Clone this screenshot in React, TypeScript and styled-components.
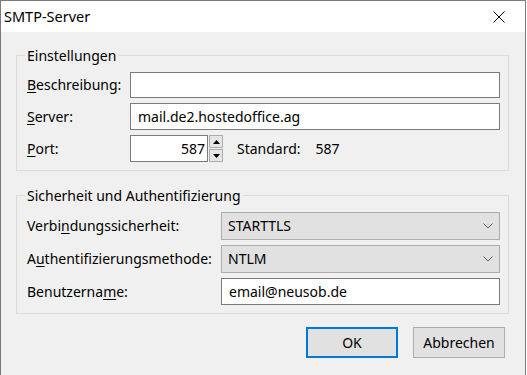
import React from "react";
import styled, { createGlobalStyle } from "styled-components";

const Global = createGlobalStyle`
  html, body { margin: 0; padding: 0; background: #ffffff; }
  body { font-family: "Noto Sans", "Open Sans", sans-serif; }
  * { box-sizing: border-box; }
`;

const FONT = `"Noto Sans", "Open Sans", sans-serif`;
const FS = "14px";

const Window = styled.div`
  width: 526px;
  height: 376px;
  border: 1px solid #7a7a7a;
  border-bottom: none;
  background: #f0f0f0;
  display: flex;
  flex-direction: column;
  font-family: ${FONT};
  font-size: ${FS};
  color: #000;
`;

const TitleBar = styled.div`
  height: 31px;
  background: #ffffff;
  display: flex;
  align-items: center;
  justify-content: space-between;
  padding: 0 0 0 3px;
  flex-shrink: 0;
`;

const Title = styled.span`
  font-size: 14.5px;
  line-height: 20px;
  margin-top: -1px;
`;

const CloseBtn = styled.div`
  width: 46px;
  height: 31px;
  display: flex;
  align-items: center;
  justify-content: center;
  margin-right: 3px;
`;

const Body = styled.div`
  flex: 1;
  padding: 13px 16px 0 15px;
  display: flex;
  flex-direction: column;
`;

const Group = styled.fieldset<{ $top?: number }>`
  margin: ${(p) => p.$top ?? 0}px 0 0 0;
  border: 1px solid #dcdcdc;
  padding: 6px 8px 8px 10px;
  display: flex;
  flex-direction: column;
  gap: 5px;
  min-width: 0;
`;

const Legend = styled.legend`
  padding: 0 2px;
  margin-left: -2px;
  font-size: ${FS};
  line-height: 21px;
  height: 21px;
`;

const Row = styled.div<{ $label: number }>`
  display: grid;
  grid-template-columns: ${(p) => p.$label}px 1fr;
  align-items: center;
`;

const Label = styled.label`
  font-size: ${FS};
  line-height: 20px;
  white-space: nowrap;
`;

const Key = styled.span`
  text-decoration: underline;
  text-underline-offset: 2px;
`;

const TextBox = styled.div<{ $h?: number; $align?: string; $w?: number }>`
  height: ${(p) => p.$h ?? 27}px;
  width: ${(p) => (p.$w ? `${p.$w}px` : "auto")};
  border: 1px solid #7a7a7a;
  background: #ffffff;
  display: flex;
  align-items: center;
  justify-content: ${(p) => p.$align ?? "flex-start"};
  padding: 0 6px 0 7px;
  font-size: ${FS};
  line-height: 20px;
`;

const PortLine = styled.div`
  display: flex;
  align-items: center;
`;

const Spinner = styled.div`
  width: 14px;
  height: 27px;
  margin-left: 1px;
  display: flex;
  flex-direction: column;
  gap: 1px;
`;

const SpinHalf = styled.div`
  flex: 1;
  border: 1px solid #adadad;
  background: #e6e6e6;
  display: flex;
  align-items: center;
  justify-content: center;
`;

const StdText = styled.span<{ $ml: number }>`
  margin-left: ${(p) => p.$ml}px;
  font-size: ${FS};
  line-height: 20px;
`;

const Select = styled.div`
  height: 28px;
  border: 1px solid #adadad;
  background: #e1e1e1;
  display: flex;
  align-items: center;
  justify-content: space-between;
  padding: 0 6px 0 6px;
  font-size: ${FS};
  line-height: 20px;
`;

const Buttons = styled.div`
  display: flex;
  justify-content: flex-end;
  gap: 15px;
  margin-top: 13px;
  padding-right: 4px;
`;

const Button = styled.div<{ $default?: boolean }>`
  width: 92px;
  height: 31px;
  background: #e1e1e1;
  border: ${(p) => (p.$default ? "2px solid #0078d7" : "1px solid #adadad")};
  display: flex;
  align-items: center;
  justify-content: center;
  font-size: ${FS};
  line-height: 20px;
`;

const Chevron = () => (
  <svg width="10" height="6" viewBox="0 0 10 6">
    <path d="M0.5 0.5 L5 5 L9.5 0.5" fill="none" stroke="#606060" strokeWidth="1" />
  </svg>
);

const Up = () => (
  <svg width="7" height="4" viewBox="0 0 7 4">
    <path d="M0 4 L3.5 0 L7 4 Z" fill="#000" />
  </svg>
);

const Down = () => (
  <svg width="7" height="4" viewBox="0 0 7 4">
    <path d="M0 0 L3.5 4 L7 0 Z" fill="#000" />
  </svg>
);

export default function App() {
  return (
    <>
      <Global />
      <Window>
        <TitleBar>
          <Title>SMTP-Server</Title>
          <CloseBtn>
            <svg width="12" height="12" viewBox="0 0 12 12">
              <path d="M0.5 0.5 L11.5 11.5 M11.5 0.5 L0.5 11.5" stroke="#000" strokeWidth="1" />
            </svg>
          </CloseBtn>
        </TitleBar>
        <Body>
          <Group>
            <Legend>Einstellungen</Legend>
            <Row $label={103}>
              <Label>
                <Key>B</Key>eschreibung:
              </Label>
              <TextBox $h={26} />
            </Row>
            <Row $label={103}>
              <Label>
                <Key>S</Key>erver:
              </Label>
              <TextBox>mail.de2.hostedoffice.ag</TextBox>
            </Row>
            <Row $label={103}>
              <Label>
                <Key>P</Key>ort:
              </Label>
              <PortLine>
                <TextBox $w={78} $align="flex-end" style={{ paddingRight: 2 }}>
                  587
                </TextBox>
                <Spinner>
                  <SpinHalf>
                    <Up />
                  </SpinHalf>
                  <SpinHalf>
                    <Down />
                  </SpinHalf>
                </Spinner>
                <StdText $ml={14}>Standard:</StdText>
                <StdText $ml={15}>587</StdText>
              </PortLine>
            </Row>
          </Group>
          <Group $top={14}>
            <Legend>Sicherheit und Authentifizierung</Legend>
            <Row $label={194}>
              <Label>
                Verbi<Key>n</Key>dungssicherheit:
              </Label>
              <Select>
                <span>STARTTLS</span>
                <Chevron />
              </Select>
            </Row>
            <Row $label={194}>
              <Label>
                A<Key>u</Key>thentifizierungsmethode:
              </Label>
              <Select>
                <span>NTLM</span>
                <Chevron />
              </Select>
            </Row>
            <Row $label={194}>
              <Label>
                Benutzerna<Key>m</Key>e:
              </Label>
              <TextBox>email@neusob.de</TextBox>
            </Row>
          </Group>
          <Buttons>
            <Button $default>OK</Button>
            <Button>Abbrechen</Button>
          </Buttons>
        </Body>
      </Window>
    </>
  );
}
